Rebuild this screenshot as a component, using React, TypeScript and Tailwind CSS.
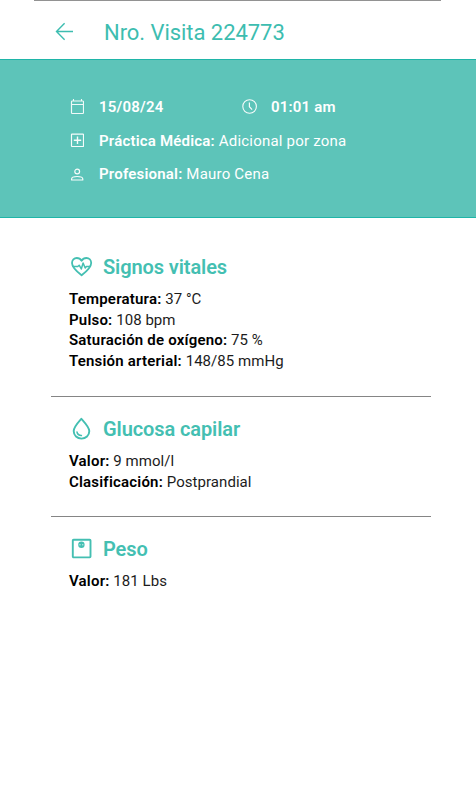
import React from 'react';

type Field = { label: string; value: string };

const CalendarIcon = () => (
  <svg width="14" height="16" viewBox="0 0 14 16" fill="none" stroke="currentColor" className="opacity-90">
    <rect x="1.5" y="2" width="12" height="12.5" rx="0.8" strokeWidth="1.2" />
    <path d="M1 5.5h13M3.5 0v2M11.5 0v2" strokeWidth="1.1" />
  </svg>
);

const ClockIcon = () => (
  <svg width="16" height="16" viewBox="0 0 16 16" fill="none" stroke="currentColor" className="opacity-95">
    <circle cx="7.6" cy="7.5" r="6.8" strokeWidth="1.1" />
    <path d="M7.4 3.4v4.3l2.7 3" strokeWidth="1.2" />
  </svg>
);

const PracticeIcon = () => (
  <svg width="14" height="16" viewBox="0 0 14 16" fill="none" stroke="currentColor" className="opacity-95">
    <rect x="1.5" y="1.1" width="12" height="12.4" rx="0.5" strokeWidth="1.2" />
    <path d="M7.5 3.6v7.4M3.8 7.3h7.4" strokeWidth="1.4" />
  </svg>
);

const PersonIcon = () => (
  <svg width="14" height="16" viewBox="0 0 14 16" fill="none" stroke="currentColor" strokeWidth="1.2" className="opacity-95">
    <circle cx="7.2" cy="4.5" r="2.4" />
    <path d="M1.6 13v-1c0-1.6 2.9-2.5 5.6-2.5s5.6 0.9 5.6 2.5v1z" strokeLinejoin="round" />
  </svg>
);

const HeartIcon = () => (
  <svg width="24" height="24" viewBox="-0.8 0.2 24 24" fill="none" stroke="currentColor" strokeWidth="1.8" strokeLinejoin="round" strokeLinecap="round">
    <path d="M11.8 20.5C7.8 17.4 2.2 12.7 2.2 8.2c0-2.9 2.1-5 4.8-5 1.9 0 3.7 1 4.8 2.7 1.1-1.7 2.9-2.7 4.8-2.7 2.7 0 4.8 2.1 4.8 5 0 4.5-5.6 9.2-9.6 12.3z" />
    <path d="M3.2 11.7h4.8l1.4-1.3 2.1 3.8 1.8-6 2.1 5 1.2-1.5h3.6" strokeWidth="1.5" />
  </svg>
);

const DropIcon = () => (
  <svg width="24" height="24" viewBox="-0.7 0.2 24 24" fill="none" stroke="currentColor" strokeWidth="1.9" strokeLinejoin="round" strokeLinecap="round">
    <path d="M11.7 2C8.7 5.4 4 10.3 4 14.3c0 4.5 3.5 7.5 7.8 7.5s7.8-3 7.8-7.5c0-4-4.9-8.9-7.9-12.3z" />
    <path d="M7.3 15.2c0.4 2.2 1.9 3.3 4.4 3.6" strokeWidth="1.5" />
  </svg>
);

const ScaleIcon = () => (
  <svg width="24" height="24" viewBox="-0.8 0.2 24 24" fill="none" stroke="currentColor" strokeWidth="1.9">
    <rect x="3" y="2.9" width="17.7" height="17.7" rx="0.8" />
    <circle cx="11.6" cy="8" r="3.2" fill="currentColor" stroke="none" />
    <path d="M9.5 8h1.4M12.2 8h1.4" stroke="white" strokeWidth="0.8" />
  </svg>
);

const sections: { title: string; icon: React.FC; fields: Field[] }[] = [
  {
    title: 'Signos vitales',
    icon: HeartIcon,
    fields: [
      { label: 'Temperatura', value: '37 °C' },
      { label: 'Pulso', value: '108 bpm' },
      { label: 'Saturación de oxígeno', value: '75 %' },
      { label: 'Tensión arterial', value: '148/85 mmHg' },
    ],
  },
  {
    title: 'Glucosa capilar',
    icon: DropIcon,
    fields: [
      { label: 'Valor', value: '9 mmol/l' },
      { label: 'Clasificación', value: 'Postprandial' },
    ],
  },
  {
    title: 'Peso',
    icon: ScaleIcon,
    fields: [{ label: 'Valor', value: '181 Lbs' }],
  },
];

const App: React.FC = () => {
  return (
    <div className="min-h-screen bg-white font-['Roboto',sans-serif] text-[15px] text-black">
      <div className="h-px ml-[34px] mr-[35px] bg-[#929292]" />

      <header className="h-[58px] pl-[55px] pt-[4px] flex items-center text-[#3dbdb0]">
        <button className="w-[49px] pb-[3px]" aria-label="Volver">
          <svg width="20" height="20" viewBox="0 0 20 20" fill="none" stroke="currentColor" strokeWidth="1.4">
            <path d="M18 10.5H1.5M9.6 2.3L1.5 10.5l8.1 8.2" />
          </svg>
        </button>
        <h1 className="text-[22px] font-normal tracking-[-0.05px]">Nro. Visita 224773</h1>
      </header>

      {/* Visit summary */}
      <div className="h-[159px] border-y border-[#1fb5a8] bg-[#5dc4b9] pl-[70px] pt-[30px] tracking-[0.2px] text-white">
        <div className="flex h-[34px] items-center">
          <div className="flex w-[172px] items-center gap-[15px]">
            <CalendarIcon />
            <span className="font-semibold">15/08/24</span>
          </div>
          <div className="flex items-center gap-[13px]">
            <ClockIcon />
            <span className="font-semibold">01:01 am</span>
          </div>
        </div>
        <div className="flex h-[34px] items-center gap-[15px]">
          <PracticeIcon />
          <p><b className="font-semibold">Práctica Médica:</b> Adicional por zona</p>
        </div>
        <div className="flex h-[33px] items-center gap-[15px]">
          <PersonIcon />
          <p><b className="font-semibold">Profesional:</b> Mauro Cena</p>
        </div>
      </div>

      <main className="ml-[51px] mr-[45px] pt-[17px]">
        {sections.map(({ title, icon: Icon, fields }) => (
          <section key={title} className="border-b border-[#858585] pl-[18px] pt-[19px] pb-[24px] last:border-b-0">
            <h2 className="flex h-[26px] items-center gap-[10px] text-xl font-semibold tracking-[-0.1px] text-[#44bfb2]">
              <Icon />
              {title}
            </h2>
            <div className="pt-[9px] leading-[20.7px]">
              {fields.map(field => (
                <p key={field.label} className="tracking-[0.05px] text-[#1c1c1c]">
                  <b className="font-semibold tracking-[0.2px] text-black">{field.label}:</b> {field.value}
                </p>
              ))}
            </div>
          </section>
        ))}
      </main>
    </div>
  );
};

export default App;
